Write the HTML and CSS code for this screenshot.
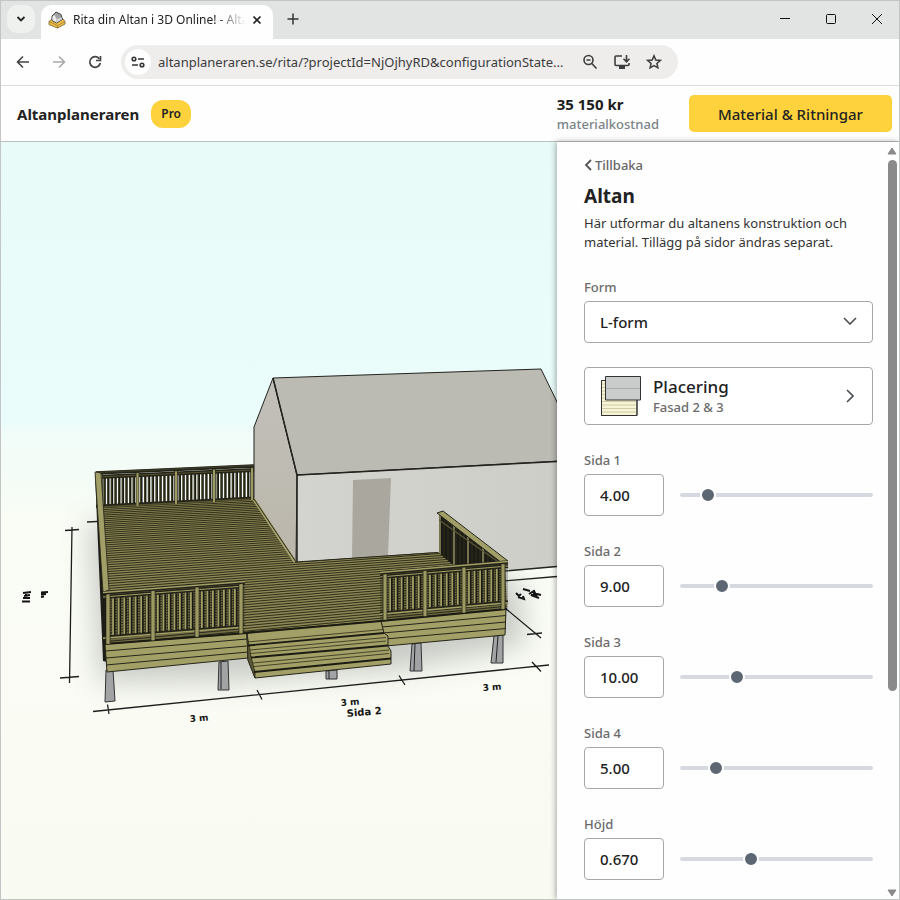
FILE: index.html
```html
<!DOCTYPE html>
<html lang="sv">
<head>
<meta charset="utf-8">
<title>Rita din Altan i 3D Online!</title>
<link rel="stylesheet" href="styles.css">
</head>
<body>
<div class="window">
  <div class="tabstrip">
    <button class="tab-search" aria-label="Sök flikar"><svg width="10" height="8" viewBox="0 0 10 8"><path d="M1.5 2 5 5.5 8.500 2" fill="none" stroke="#222" stroke-width="1.8"/></svg></button>
    <div class="tab">
      <svg class="favicon" width="18" height="18" viewBox="0 0 18 18"><path d="M1 10.500 4 8 15 8 17 10.500V13L9.500 17 1 13.500Z" fill="#f3c34b" stroke="#6d5a2a" stroke-width=".8"/><path d="M1 10.500 9.500 14.500 17 10.500M9.500 14.500V17" fill="none" stroke="#8b6b25" stroke-width=".7"/><path d="M4 5 8 1 13 3.500 14.500 8.500 8.500 12 4 9.500Z" fill="#a2a3a5" stroke="#3f3f3f"/><path d="M4.500 5.500 6.500 4 8.500 8V11.500L4.500 9.200Z" fill="#ececec"/><path d="M8.500 8 14 6.500V8.500L8.500 11.700Z" fill="#d2d2d2"/></svg>
      <span class="tab-title">Rita din Altan i 3D Online! - Alta</span>
      <button class="tab-close" aria-label="Stäng flik"><svg width="10" height="10" viewBox="0 0 10 10"><path d="M1.500 1.500 8.500 8.500M8.500 1.500 1.500 8.500" stroke="#222" stroke-width="1.700"/></svg></button>
    </div>
    <button class="new-tab" aria-label="Ny flik"><svg width="12" height="12" viewBox="0 0 12 12"><path d="M6 .5V11.500M.5 6H11.500" stroke="#333" stroke-width="1.500"/></svg></button>
    <div class="window-controls">
      <button aria-label="Minimera"><svg width="12" height="12" viewBox="0 0 12 12"><path d="M1 5.500H11" stroke="#111"/></svg></button>
      <button aria-label="Maximera"><svg width="12" height="12" viewBox="0 0 12 12"><rect x="1.500" y="1.500" width="9" height="9" rx="1" fill="none" stroke="#111"/></svg></button>
      <button aria-label="Stäng"><svg width="12" height="12" viewBox="0 0 12 12"><path d="M1 1 11 11M11 1 1 11" stroke="#111"/></svg></button>
    </div>
  </div>

  <div class="toolbar">
    <button class="nav" aria-label="Bakåt"><svg width="14" height="14" viewBox="0 0 14 14"><path d="M13 7H2M7 1.500 1.500 7 7 12.500" fill="none" stroke="#444" stroke-width="1.600"/></svg></button>
    <button class="nav" aria-label="Framåt"><svg width="14" height="14" viewBox="0 0 14 14"><path d="M1 7H12M7 1.500 12.500 7 7 12.500" fill="none" stroke="#a9a9a9" stroke-width="1.600"/></svg></button>
    <button class="nav" aria-label="Ladda om"><svg width="14" height="14" viewBox="0 0 14 14"><path d="M11.500 4A5.300 5.300 0 1 0 12.300 8" fill="none" stroke="#444" stroke-width="1.700"/><path d="M12.500 1V5.500H8" fill="none" stroke="#444" stroke-width="1.600"/></svg></button>
    <div class="omnibox">
      <button class="site-info" aria-label="Webbplatsinformation"><svg width="14" height="12" viewBox="0 0 14 12"><g fill="none" stroke="#333" stroke-width="1.600"><circle cx="3" cy="3" r="1.800"/><path d="M7 3H13M1 9H7"/><circle cx="11" cy="9" r="1.800"/></g></svg></button>
      <input class="url" aria-label="Adress" value="altanplaneraren.se/rita/?projectId=NjOjhyRD&amp;configurationState..." readonly>
      <button class="omni-icon" aria-label="Zooma"><svg width="16" height="16" viewBox="0 0 16 16"><g fill="none" stroke="#3d3d3d" stroke-width="1.600"><circle cx="6.500" cy="6" r="4.500"/><path d="M9.800 9.500 14.500 14.500M4.500 6H8.500"/></g></svg></button>
      <button class="omni-icon" aria-label="Installera app"><svg width="18" height="16" viewBox="0 0 18 16"><g fill="none" stroke="#3d3d3d" stroke-width="1.600"><path d="M9 2H3Q2 2 2 3V10.500Q2 11.500 3 11.500H15Q16 11.500 16 10.500V9M13.500 1V7M10.500 4.800 13.500 7.800 16.500 4.800"/></g><path d="M6 12H12V15H6Z" fill="#3d3d3d"/></svg></button>
      <button class="omni-icon" aria-label="Bokmärk"><svg width="16" height="16" viewBox="0 0 16 16"><path d="M8 1.800 9.800 6 14.300 6.400 10.900 9.400 11.900 13.800 8 11.500 4.100 13.800 5.100 9.400 1.700 6.400 6.200 6Z" fill="none" stroke="#3d3d3d" stroke-width="1.500"/></svg></button>
    </div>
  </div>

  <header class="app-header">
    <span class="brand">Altanplaneraren</span>
    <span class="badge">Pro</span>
    <div class="cost"><strong>35 150 kr</strong><span>materialkostnad</span></div>
    <button class="cta">Material &amp; Ritningar</button>
  </header>

  <main class="workspace">
    <svg class="scene" viewBox="1 142 556 757" preserveAspectRatio="xMinYMid slice" role="img" aria-label="3D-vy av altan">
      <defs>
        <linearGradient id="sky" x1="0" y1="0" x2="0" y2="1"><stop offset="0" stop-color="#e9fbf8"/><stop offset=".37" stop-color="#ebfdfa"/><stop offset=".39" stop-color="#f2fcf8"/><stop offset=".46" stop-color="#f5fcf6"/><stop offset=".5" stop-color="#fafdf6"/><stop offset="1" stop-color="#f9faf2"/></linearGradient>
        <linearGradient id="gable" x1="0" y1="0" x2="0" y2="1"><stop offset="0" stop-color="#c2c0ba"/><stop offset="1" stop-color="#bab6aa"/></linearGradient>
        <linearGradient id="wall" x1="0" y1="0" x2="1" y2="0"><stop offset="0" stop-color="#d3d4cf"/><stop offset="1" stop-color="#cecec8"/></linearGradient>
        <filter id="soft" x="-30%" y="-30%" width="160%" height="160%"><feGaussianBlur stdDeviation="14"/></filter>
        <clipPath id="deck-clip"><path d="M101 506 253 498 295 562 438 552 505 564 507 609 247 634 107 644Z"/></clipPath>
        <clipPath id="side-clip"><path d="M439 514 504 562 453 565 439 553Z"/></clipPath>
      </defs>
      <rect x="1" y="142" width="556" height="757" fill="url(#sky)"/>
      <path d="M88 520 100 682 250 680 400 670 525 645 520 580 300 560Z" fill="#8d8f8c" opacity=".45" filter="url(#soft)"/>

      <g stroke="#23231f" stroke-width="1" stroke-linejoin="round">
        <path d="M297 475 557 461V567L505 571 438 552 296 562Z" fill="url(#wall)" stroke="none"/>
        <path d="M254 427 273 378 297 475 296 562 254 499Z" fill="url(#gable)"/>
        <path d="M273 378 541 369 560 408V461L297 475Z" fill="#bbbab3"/>
        <path d="M297 475 557 461.500M273 378 297 475V562" fill="none" stroke-width="1.500"/>
        <path d="M353 480 391 478 388 555.500 352 558Z" fill="#aaa89e" stroke="none"/>
        <path d="M505 571 557 566.500M503 581 557 576.500M87 522 97 521.500" fill="none" stroke-width="1.300"/>
      </g>

      <g fill="#a1a3a5" stroke="#333" stroke-width="1">
        <path d="M106 670H113L115 701 105 702Z"/><path d="M219 662 228 661 229 690 218 690Z"/><path d="M326 671 337 670V679H326Z"/><path d="M412 644 421 643 422 671H410Z"/><path d="M494 636 503 635V663H491Z"/>
        <path d="M221 662V689M415 644 414 671M498 636 496 662M329 671V679" stroke="#222"/>
      </g>

      <path d="M101 506 253 498 295 562 438 552 505 564 507 609 247 634 107 644Z" fill="#8c8757"/>
      <g id="boards" clip-path="url(#deck-clip)" stroke="#2b2a14" fill="none"></g>
      <path d="M253 498 295 562" stroke="#a8a56e" stroke-width="3"/>
      <path d="M254 499 296 562 438 552.500" stroke="#25251a" stroke-width="1" fill="none"/>

      <g id="rail-back"></g>
      <path d="M95 474 99 474 106 592 107 662 103 661Z" fill="#1d1d16"/>
      <path d="M95 472 101 473 109 590 103 592Z" fill="#a19f67" stroke="#26261b" stroke-width=".8"/>

      <path d="M439 514 504 562 453 565 439 553Z" fill="#1b1a14"/>
      <g id="side-balusters" clip-path="url(#side-clip)"></g>
      <path d="M437 513 443 511 508 561 502 563Z" fill="#a19f67" stroke="#26261b" stroke-width="1"/>

      <g fill="#a3a067" stroke="#26251a" stroke-width="1">
        <path d="M105 644 247 633 248 658 107 672Z"/>
        <path d="M381 621 506 609 505 635 386 646Z"/>
        <path d="M106 651 247 639M106 658 247 646M106 665 248 652M382 627 506 615.500M383 633 506 622M385 639 506 628.500" fill="none"/>
      </g>
      <path d="M105 644 247 633M381 621 507 609" stroke="#1c1b12" stroke-width="2"/>
      <path d="M247 632 381 621 384 633 388 636V646L391 651V664L255 678 248 660Z" fill="#a3a067" stroke="#26251a"/>
      <path d="M247 634 248 660 255 678V672L251 657 249 645Z" fill="#5c5935" stroke="#26251a" stroke-width=".8"/>
      <path d="M247 633 381 621M248 645.500 384 633M251 657.500 388 645.500M254 672 391 658.500" stroke="#1c1b12" stroke-width="1.800"/>
      <path d="M247 642 383 629.500M251 653.500 386 641M254 666.500 389 653.500M250 650 386 637.500M253 663 389 650" stroke="#3b3920" stroke-width=".9"/>

      <g id="rail-left"></g>
      <g id="rail-right"></g>

      <g fill="none" stroke="#1d1d1d" stroke-width="1.300">
        <path d="M72 527 69.500 683M65 530.500 79 529.500M60 678 79 676.500"/>
        <path d="M93 711.500 549 665M107.500 704.500 109 714M257 690 262 699.500M399 675.500 405 685M532 662 541 671.500"/>
        <path d="M505 608 541 638M527 634.500 542 633"/>
      </g>
      <g fill="none" stroke="#151515" stroke-width="2"><path d="M23 593 31 592M24 596 30 595M23 598 30 598M26 592V598M22 601.500H30M41 592.500 48 592M41 594.500 46 594M41 597 44 596.500M516 593 519 596 521 594M518 597 524 599 523 596M523 589 530 591M529 594 534 591 536 595 531 595 539 598M533 593 541 595"/></g>
      <g class="dim-labels"><text transform="translate(190 722) rotate(-5)">3 m</text><text transform="translate(341 706) rotate(-5)">3 m</text><text transform="translate(347 717) rotate(-5)" class="dim-name">Sida 2</text><text transform="translate(483 691) rotate(-5)">3 m</text></g>
    </svg>

    <aside class="panel">
      <form class="panel-body">
        <button type="button" class="back"><svg width="9" height="12" viewBox="0 0 9 12"><path d="M7 1 2 6 7 11" fill="none" stroke="#555" stroke-width="1.800"/></svg>Tillbaka</button>
        <h1>Altan</h1>
        <p>Här utformar du altanens konstruktion och material. Tillägg på sidor ändras separat.</p>
        <label for="form">Form</label>
        <div class="select-wrap">
          <select id="form"><option>L-form</option></select>
          <svg class="chevron" width="14" height="8" viewBox="0 0 14 8"><path d="M1 1 7 7 13 1" fill="none" stroke="#4b4f52" stroke-width="1.600"/></svg>
        </div>
        <button type="button" class="placement">
          <svg width="40" height="40" viewBox="0 0 40 40"><path d="M.5 4.500H36V39.500H.5Z" fill="#f6f4d4" stroke="#333"/><path d="M1 8H35M1 11.500H35M1 15H35M1 18.500H35M1 22H35M1 25.500H35M1 29H35M1 32.500H35M1 36H35" stroke="#cfccaa"/><path d="M.5 4.500H36V39.500H.5Z" fill="none" stroke="#333"/><path d="M4.500.5H39.500V24H4.500Z" fill="#c9cccb" stroke="#333"/><path d="M5 12.500H39" stroke="#aaadad"/></svg>
          <span class="placement-text"><strong>Placering</strong><span>Fasad 2 &amp; 3</span></span>
          <svg width="8" height="14" viewBox="0 0 8 14"><path d="M1 1 7 7 1 13" fill="none" stroke="#4b4f52" stroke-width="1.600"/></svg>
        </button>
        <label for="s1">Sida 1</label>
        <div class="measure"><input id="s1" type="text" value="4.00"><input type="range" aria-label="Sida 1" max="1000" value="113"></div>
        <label for="s2">Sida 2</label>
        <div class="measure"><input id="s2" type="text" value="9.00"><input type="range" aria-label="Sida 2" max="1000" value="192"></div>
        <label for="s3">Sida 3</label>
        <div class="measure"><input id="s3" type="text" value="10.00"><input type="range" aria-label="Sida 3" max="1000" value="277"></div>
        <label for="s4">Sida 4</label>
        <div class="measure"><input id="s4" type="text" value="5.00"><input type="range" aria-label="Sida 4" max="1000" value="158"></div>
        <label for="h">Höjd</label>
        <div class="measure"><input id="h" type="text" value="0.670"><input type="range" aria-label="Höjd" max="1000" value="356"></div>
      </form>
      <div class="scrollbar" aria-hidden="true">
        <svg width="10" height="8" viewBox="0 0 10 8"><path d="M5 1 9 7H1Z" fill="#8a8a8a" stroke="#8a8a8a" stroke-linejoin="round"/></svg>
        <div class="track"><div class="thumb"></div></div>
        <svg width="10" height="8" viewBox="0 0 10 8"><path d="M5 7 9 1H1Z" fill="#8a8a8a" stroke="#8a8a8a" stroke-linejoin="round"/></svg>
      </div>
    </aside>
  </main>
</div>
<script src="scene.js"></script>
</body>
</html>
```
FILE: styles.css
```css
* { box-sizing: border-box; }

body {
  margin: 0;
  font-family: "Noto Sans", "Open Sans", sans-serif;
  font-size: 13px;
  line-height: 20px;
  color: #222;
}

button, input, select { font: inherit; color: inherit; }
button { border: 0; padding: 0; background: none; }
svg { display: block; flex: none; }

.window {
  display: flex;
  flex-direction: column;
  height: 100vh;
  border: 1px solid #c3c5c4;
  background: #fefefe;
  overflow: hidden;
}

/* Browser frame */
.tabstrip {
  display: flex;
  align-items: flex-end;
  flex: none;
  height: 38px;
  padding-left: 6px;
  background: #e1e4e3;
}

.tab-search {
  display: grid;
  place-items: center;
  width: 28px;
  height: 28px;
  margin-bottom: 6px;
  border-radius: 10px;
  background: #eff1ef;
}

.tab {
  display: flex;
  align-items: center;
  width: 232px;
  height: 34px;
  margin-left: 6px;
  padding: 0 11px 4px 7px;
  border-radius: 10px 10px 0 0;
  background: #fefefe;
}

.tab-title {
  flex: 1;
  min-width: 0;
  margin: 0 1px 0 7px;
  white-space: nowrap;
  font-size: 12px;
  mask-image: linear-gradient(to right, #000 80%, transparent 97%);
}

.new-tab {
  margin: 0 0 14px 14px;
}

.window-controls {
  display: flex;
  gap: 34px;
  margin: 0 16px 14px auto;
}

.toolbar {
  display: flex;
  align-items: center;
  flex: none;
  height: 47px;
  padding-left: 15px;
  gap: 22px;
  border-bottom: 1px solid #dcdedd;
}

.omnibox {
  display: flex;
  align-items: center;
  width: 557px;
  height: 34px;
  margin-left: -3px;
  padding: 0 16px 0 4px;
  border-radius: 17px;
  background: #eeedec;
}

.site-info {
  display: grid;
  place-items: center;
  flex: none;
  width: 26px;
  height: 26px;
  border-radius: 50%;
  background: #fff;
}

.url {
  flex: 1;
  min-width: 0;
  margin-left: 7px;
  padding: 0;
  border: 0;
  background: none;
  color: #3c3c3c;
}

.omni-icon { margin-left: 15px; }
.url + .omni-icon { margin-left: 12px; }

/* Application header */
.app-header {
  display: flex;
  align-items: center;
  flex: none;
  height: 56px;
  padding: 0 7px 0 16px;
  border-bottom: 1px solid #bcc1bf;
}

.brand {
  font-size: 15px;
  font-weight: 700;
}

.badge {
  margin-left: 12px;
  padding: 4px 10px;
  border-radius: 12px;
  background: #fdd23c;
  font-size: 12px;
  font-weight: 600;
}

.cost {
  display: flex;
  flex-direction: column;
  margin-left: auto;
  margin-right: 30px;
  color: #7b8488;
  font-weight: 500;
}

.cost strong {
  color: #1c1c1c;
  font-size: 15px;
}

.cta {
  width: 203px;
  height: 37px;
  border-radius: 5px;
  background: #fdd23c;
  font-size: 15px;
  font-weight: 500;
}

/* 3D view and settings panel */
.workspace {
  display: flex;
  flex: 1;
  min-height: 0;
}

.scene {
  flex: 1;
  min-width: 0;
  height: 100%;
}

.dim-labels {
  fill: #151515;
  font-family: "DejaVu Sans", sans-serif;
  font-size: 9px;
  font-weight: 700;
}

.dim-name { font-size: 10px; }

.panel {
  display: flex;
  flex: none;
  width: 342px;
  background: #fefefe;
  box-shadow: -1px 0 6px rgba(0, 0, 0, .35);
}

.panel-body {
  flex: 1;
  min-width: 0;
  padding: 13px 12px 0 27px;
  overflow: hidden;
}

.back {
  display: flex;
  align-items: center;
  gap: 2px;
  color: #666;
  font-weight: 500;
}

h1 {
  margin: 7px 0 4px;
  font-size: 19px;
  line-height: 28px;
  font-weight: 700;
}

p {
  margin: 0 0 25px;
  line-height: 19px;
  color: #333;
}

label {
  display: block;
  margin-bottom: 4px;
  color: #6b6b6b;
  font-weight: 500;
}

.select-wrap {
  position: relative;
  margin-bottom: 24px;
}

select,
.measure input[type="text"],
.placement {
  border: 1px solid #a4a8ab;
  border-radius: 4px;
  background: #fff;
  padding: 0 15px;
  font-size: 15px;
  font-weight: 500;
}

select {
  display: block;
  width: 100%;
  height: 42px;
  appearance: none;
}

.chevron {
  position: absolute;
  top: 16px;
  right: 16px;
  pointer-events: none;
}

.placement {
  display: flex;
  align-items: center;
  width: 100%;
  height: 58px;
  margin-bottom: 25px;
  padding: 0 18px 0 16px;
  text-align: left;
}

.placement-text {
  display: flex;
  flex-direction: column;
  flex: 1;
  margin-left: 12px;
  font-size: 13px;
  line-height: 18px;
  color: #6b6b6b;
}

.placement-text strong {
  font-size: 17px;
  line-height: 22px;
  font-weight: 500;
  color: #222;
}

.measure {
  display: flex;
  align-items: center;
  gap: 16px;
  margin-bottom: 25px;
}

.measure input[type="text"] {
  width: 80px;
  height: 42px;
}

.measure input[type="range"] {
  flex: 1;
  min-width: 0;
  height: 16px;
  margin: 0;
  appearance: none;
  background: none;
}

input[type="range"]::-webkit-slider-runnable-track {
  height: 4px;
  border-radius: 2px;
  background: #d6dae0;
}

input[type="range"]::-webkit-slider-thumb {
  appearance: none;
  width: 16px;
  height: 16px;
  margin-top: -6px;
  border: 2px solid #fefefe;
  border-radius: 50%;
  background: #5d6673;
}

.scrollbar {
  display: flex;
  flex-direction: column;
  align-items: center;
  flex: none;
  width: 14px;
  padding: 5px 0 2px;
}

.track {
  flex: 1;
  width: 9px;
  margin: 5px 0 1px;
}

.thumb {
  height: 73%;
  border-radius: 5px;
  background: #8a8a8a;
}
```
FILE: scene.js
```js
const NS = "http://www.w3.org/2000/svg";

function add(parent, d, attrs) {
  const path = document.createElementNS(NS, "path");
  path.setAttribute("d", d);
  for (const key in attrs) path.setAttribute(key, attrs[key]);
  parent.appendChild(path);
}

// Deck boards, spaced wider towards the viewer.
const boards = document.getElementById("boards");
for (let y = 508, step = 1.8; y < 648; y += step, step += 0.018) {
  const k = (y - 508) / 136;
  const slope = 0.055 + 0.04 * k;
  add(boards, `M100 ${y} L510 ${y - 410 * slope}`, { "stroke-width": 0.95 });
}

// A railing between two end points: top line, bottom line, posts and balusters.
function railing(id, r) {
  const g = document.getElementById(id);
  const at = (line, x) => line[1] + (line[3] - line[1]) * (x - line[0]) / (line[2] - line[0]);
  const top = x => at(r.top, x);
  const bottom = x => at(r.bottom, x);
  const a = r.top[0], b = r.top[2];
  if (r.shade) {
    add(g, `M${a} ${top(a)}L${b} ${top(b)}V${bottom(b)}L${a} ${bottom(a)}Z`, { fill: r.shade, opacity: 0.25 });
  }
  for (let i = 0; i + 1 < r.posts.length; i++) {
    const from = r.posts[i], to = r.posts[i + 1];
    for (let n = 1; n <= r.count; n++) {
      const x = from + (to - from) * n / (r.count + 1);
      const line = `M${x} ${top(x) + 5}V${bottom(x) - r.lift}`;
      add(g, line, { stroke: "#1b1a12", "stroke-width": r.dark });
      add(g, line, { stroke: r.light, "stroke-width": r.face, transform: "translate(-0.6 0)" });
    }
  }
  const rail = (dyA, dyB, w, colour) =>
    add(g, `M${a} ${dyA}L${b} ${dyB}`, { stroke: colour, "stroke-width": w });
  rail(bottom(a) - r.lift, bottom(b) - r.lift, 3, "#242318");
  rail(bottom(a) - r.lift + 1, bottom(b) - r.lift + 1, 1.4, r.light);
  rail(top(a) + 5, top(b) + 5, 4, "#242318");
  rail(top(a) + 5, top(b) + 5, 1.2, r.light);
  for (const x of r.posts) {
    add(g, `M${x} ${top(x)}V${bottom(x)}`, { stroke: "#242318", "stroke-width": r.post + 1.4 });
    add(g, `M${x} ${top(x)}V${bottom(x)}`, { stroke: "#9c9962", "stroke-width": r.post });
  }
  rail(top(a) + 1, top(b) + 1, 3.4, "#242318");
  rail(top(a) + 0.5, top(b) + 0.5, 1.6, r.cap);
}

railing("rail-back", {
  top: [96, 472, 254, 465], bottom: [101, 508, 254, 500], lift: 2,
  posts: [101, 137.5, 176, 214, 252], count: 9, dark: 2.4, light: "#55522f", face: 0.7, post: 2.2, cap: "#3a3927"
});
railing("rail-left", {
  top: [103, 592, 245, 581], bottom: [107, 644, 245, 633], shade: "#1b1a12", lift: 7,
  posts: [108, 153, 197, 241], count: 7, dark: 3.8, light: "#a3a067", face: 1.8, post: 3.4, cap: "#a3a067"
});
railing("rail-right", {
  top: [380, 572, 508, 561], bottom: [383, 620, 505, 609], shade: "#1b1a12", lift: 7,
  posts: [385, 425, 464, 503], count: 6, dark: 3.8, light: "#a3a067", face: 1.8, post: 3.2, cap: "#a3a067"
});

// Return railing seen from behind.
const side = document.getElementById("side-balusters");
for (let x = 440; x < 504; x += 4) {
  add(side, `M${x} 510V568`, { stroke: "#302e1e", "stroke-width": 1 });
}
for (const x of [440, 454, 468, 483]) {
  add(side, `M${x} 510V568`, { stroke: "#757250", "stroke-width": 2 });
}
add(side, "M439 520 504 566", { stroke: "#5b5839", "stroke-width": 1.2 });
```
